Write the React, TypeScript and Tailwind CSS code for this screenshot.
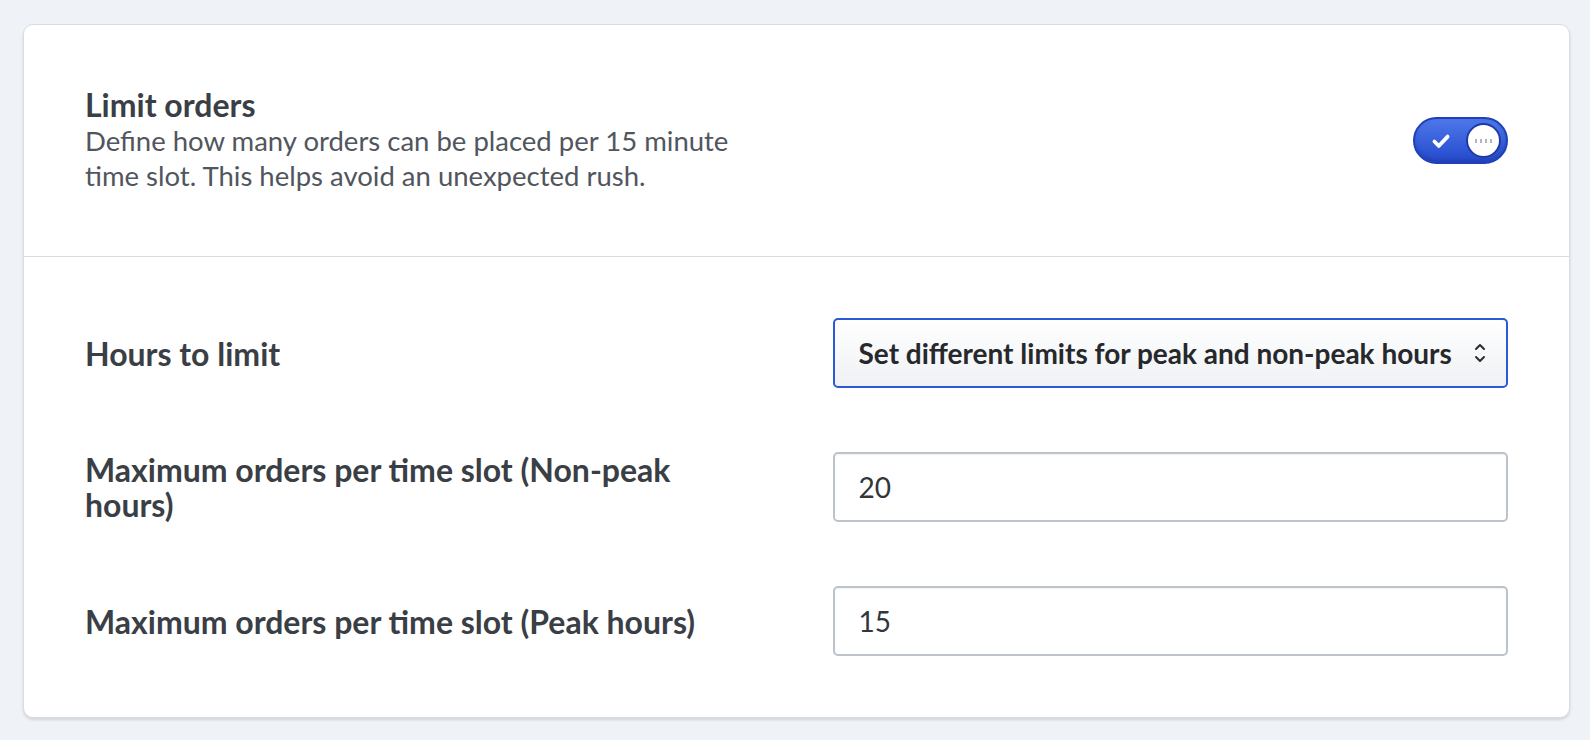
import React, { useState } from "react";

const font = { fontFamily: "Lato, 'Noto Sans', sans-serif" };

const Toggle: React.FC<{ on: boolean; onChange: (v: boolean) => void }> = ({ on, onChange }) => (
    <button
        type="button"
        onClick={() => onChange(!on)}
        className="relative flex h-[47px] w-[95px] items-center rounded-full border-2 border-[#1f40b8] bg-gradient-to-b from-[#4d77ea] to-[#2549cc] shadow-[inset_0_-2px_4px_rgba(0,0,0,0.15)]"
    >
        <svg viewBox="0 0 20 20" className="ml-[15px] h-[22px] w-[22px]">
            <path d="M4 10.5 L8 14.5 L16 6" fill="none" stroke="#fff" strokeWidth="3.4" strokeLinecap="round" strokeLinejoin="round" />
        </svg>
        <span className="absolute right-[5px] top-[4px] flex h-[35px] w-[35px] items-center justify-center gap-[3px] rounded-full border-2 border-[#1d3aa8] bg-white">
            <span className="h-[4px] w-[2px] bg-[#b3b7bd]" />
            <span className="h-[4px] w-[2px] bg-[#b3b7bd]" />
            <span className="h-[4px] w-[2px] bg-[#b3b7bd]" />
            <span className="h-[4px] w-[2px] bg-[#b3b7bd]" />
        </span>
    </button>
);

const App: React.FC = () => {
    const [enabled, setEnabled] = useState(true);
    const [nonPeak, setNonPeak] = useState("20");
    const [peak, setPeak] = useState("15");

    return (
        <div className="min-h-screen bg-[#eff2f6] pb-[22px] pl-[23px] pr-[20px] pt-[24px]" style={font}>
            <div className="rounded-[10px] border border-[#d9dde2] bg-white shadow-[0_2px_3px_rgba(0,0,0,0.12)]">
                <div className="flex h-[231px] items-center justify-between px-[61px]">
                    <div className="mb-[1px] w-[680px]">
                        <h2 className="text-[32px] font-bold leading-[36px] text-[#3a3e45]">Limit orders</h2>
                        <p className="text-[27.5px] leading-[35px] text-[#51565e]">
                            Define how many orders can be placed per 15 minute time slot. This helps avoid an unexpected rush.
                        </p>
                    </div>
                    <Toggle on={enabled} onChange={setEnabled} />
                </div>

                <div className="grid grid-cols-2 items-center gap-x-[72px] gap-y-[64px] border-t border-[#d9dce0] px-[61px] py-[61px]">
                    <label className="text-[32px] font-bold leading-[35px] text-[#3a3e45]">Hours to limit</label>
                    <div className="flex h-[70px] items-center justify-between rounded-[5px] border-2 border-[#2b5ad6] bg-gradient-to-b from-white to-[#eff1f4] pl-[24px] pr-[20px]">
                        <span className="text-[28px] font-bold text-[#26282c]">Set different limits for peak and non-peak hours</span>
                        <svg viewBox="0 0 12 24" className="h-[24px] w-[12px]">
                            <path d="M2 8 L6 4 L10 8 M2 16 L6 20 L10 16" fill="none" stroke="#2b2d31" strokeWidth="2" strokeLinecap="round" strokeLinejoin="round" />
                        </svg>
                    </div>

                    <label className="text-[32px] font-bold leading-[35px] text-[#3a3e45]">
                        Maximum orders per time slot (Non-peak hours)
                    </label>
                    <input
                        value={nonPeak}
                        onChange={e => setNonPeak(e.target.value)}
                        className="h-[70px] w-full rounded-[5px] border-2 border-[#bcc3cb] px-[24px] text-[28px] text-[#33363b] shadow-[inset_0_1px_2px_rgba(0,0,0,0.06)] outline-none"
                    />

                    <label className="text-[32px] font-bold leading-[35px] text-[#3a3e45]">
                        Maximum orders per time slot (Peak hours)
                    </label>
                    <input
                        value={peak}
                        onChange={e => setPeak(e.target.value)}
                        className="h-[70px] w-full rounded-[5px] border-2 border-[#bcc3cb] px-[24px] text-[28px] text-[#33363b] shadow-[inset_0_1px_2px_rgba(0,0,0,0.06)] outline-none"
                    />
                </div>
            </div>
        </div>
    );
};

export default App;
